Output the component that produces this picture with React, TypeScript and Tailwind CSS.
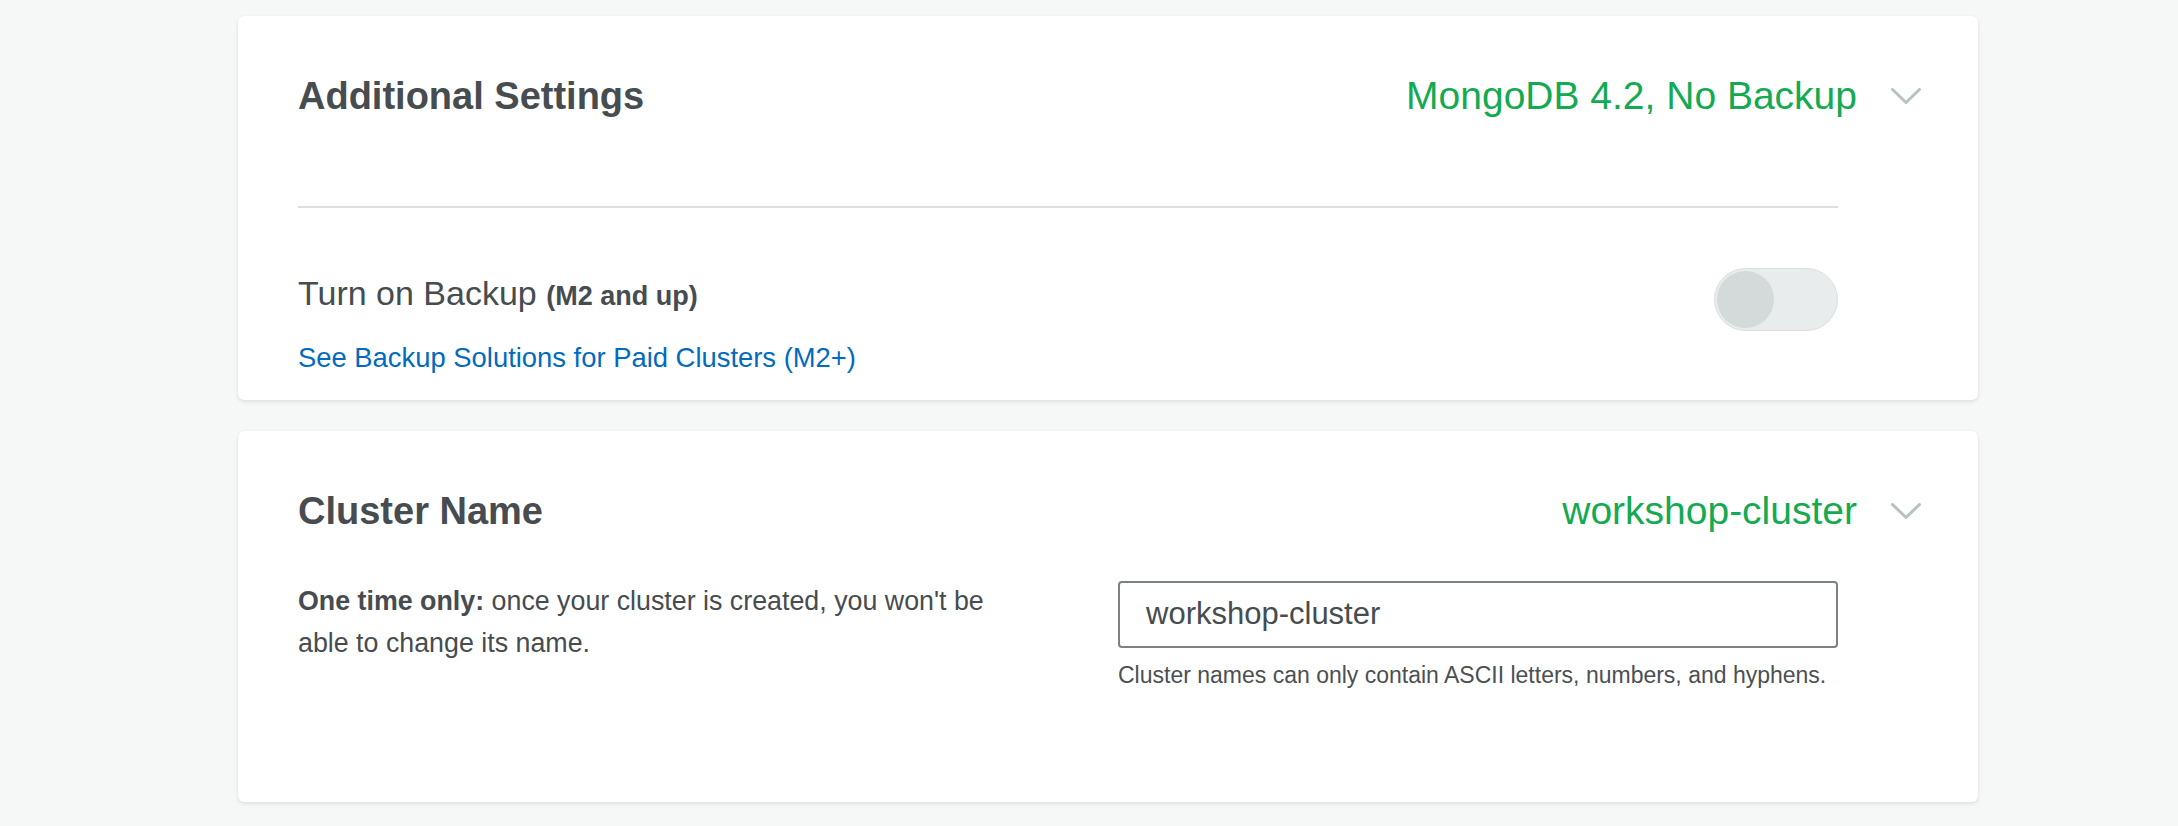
import React from 'react';

const font = "font-['Liberation_Sans',Arial,sans-serif]";

function Chevron() {
  return (
    <svg width="30" height="17" viewBox="0 0 30 17" className="shrink-0">
      <polyline
        points="1.5,1.5 15,14.5 28.5,1.5"
        fill="none"
        stroke="#b8c2c1"
        strokeWidth="3"
        strokeLinecap="round"
        strokeLinejoin="round"
      />
    </svg>
  );
}

function CardHeader({ title, value }: { title: string; value: string }) {
  return (
    <div className="flex items-center justify-between pt-[56px] pr-[57px]">
      <h2 className="text-[38px] leading-[48px] font-bold text-[#464c4f]">
        {title}
      </h2>
      <div className="flex items-center gap-[34px]">
        <span className="text-[39px] leading-[48px] text-[#13aa52]">{value}</span>
        <Chevron />
      </div>
    </div>
  );
}

function Toggle() {
  return (
    <div className="mt-[60px] w-[124px] h-[63px] rounded-full bg-[#e9ecec] border border-[#dadfdf] p-[2px] shrink-0">
      <div className="w-[57px] h-[57px] rounded-full bg-[#d4d9d9]" />
    </div>
  );
}

export default function App() {
  return (
    <div className={`min-h-screen bg-[#f6f8f8] pt-[16px] pl-[238px] ${font}`}>
      <div className="w-[1740px] flex flex-col gap-[31px]">
        {/* Additional settings */}
        <section className="bg-white rounded-[6px] shadow-[0_2px_4px_rgba(0,0,0,0.09),0_0_2px_rgba(0,0,0,0.05)] pl-[60px]">
          <CardHeader title="Additional Settings" value="MongoDB 4.2, No Backup" />
          <div className="pr-[140px]">
            <div className="mt-[86px] h-[2px] bg-[#dcdfdf]" />
            <div className="flex items-start justify-between">
              <div className="pt-[65px] pb-[26px]">
                <p className="text-[34px] leading-[40px] text-[#464c4f]">
                  Turn on Backup{' '}
                  <span className="text-[27px] font-bold">(M2 and up)</span>
                </p>
                <a
                  href="#"
                  className="block mt-[26px] text-[27.4px] leading-[32px] text-[#016bbd]"
                >
                  See Backup Solutions for Paid Clusters (M2+)
                </a>
              </div>
              <Toggle />
            </div>
          </div>
        </section>

        {/* Cluster name */}
        <section className="bg-white rounded-[6px] shadow-[0_2px_4px_rgba(0,0,0,0.09),0_0_2px_rgba(0,0,0,0.05)] pl-[60px]">
          <CardHeader title="Cluster Name" value="workshop-cluster" />
          <div className="flex items-start justify-between pr-[140px] mt-[45px] pb-[113px]">
            <p className="w-[720px] text-[26.8px] leading-[42px] text-[#464c4f]">
              <b className="font-bold">One time only:</b> once your cluster is
              created, you won't be able to change its name.
            </p>
            <div className="w-[720px] mt-[1px]">
              <div className="h-[67px] flex items-center rounded-[4px] border-2 border-[#7b8185] pl-[26px] text-[31px] text-[#464c4f]">
                workshop-cluster
              </div>
              <p className="mt-[13px] text-[23px] leading-[28px] text-[#4b5053]">
                Cluster names can only contain ASCII letters, numbers, and hyphens.
              </p>
            </div>
          </div>
        </section>
      </div>
    </div>
  );
}
